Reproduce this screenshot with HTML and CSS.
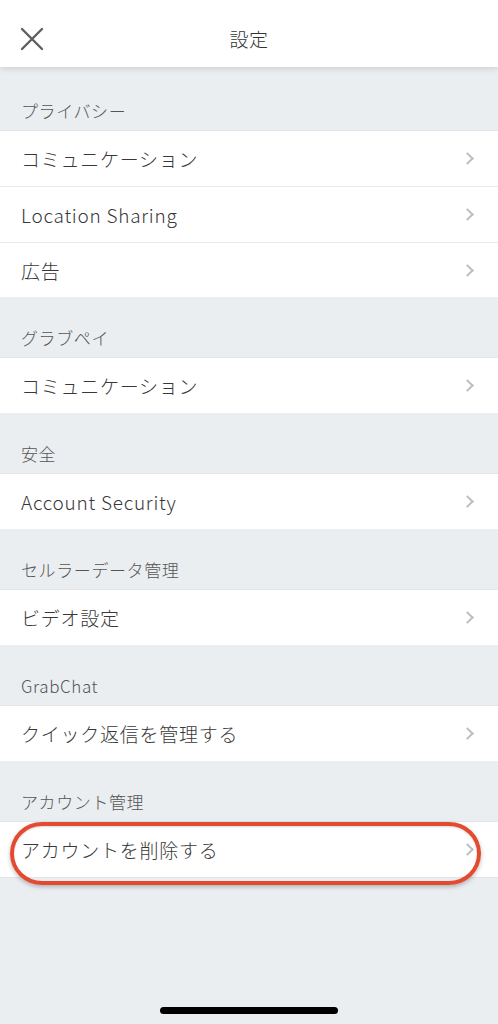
FILE: index.html
```html
<!DOCTYPE html>
<html lang="ja">
<head>
<meta charset="utf-8">
<link rel="stylesheet" href="styles.css">
</head>
<body>
<div class="page">
  <header class="topbar">
    <svg class="close" width="24" height="24" viewBox="0 0 24 24"><path d="M2 2L22 22M22 2L2 22" stroke="#5f5f5f" stroke-width="2.4" stroke-linecap="round" fill="none"/></svg>
    <div class="title">設定</div>
  </header>
  <main class="content">
    <section class="group first">
      <div class="group-title">プライバシー</div>
      <div class="rows">
        <div class="row"><span>コミュニケーション</span><i class="chev"></i></div>
        <div class="row tall"><span>Location Sharing</span><i class="chev"></i></div>
        <div class="row"><span>広告</span><i class="chev"></i></div>
      </div>
    </section>
    <section class="group">
      <div class="group-title">グラブペイ</div>
      <div class="rows">
        <div class="row"><span>コミュニケーション</span><i class="chev"></i></div>
      </div>
    </section>
    <section class="group">
      <div class="group-title">安全</div>
      <div class="rows">
        <div class="row"><span>Account Security</span><i class="chev"></i></div>
      </div>
    </section>
    <section class="group">
      <div class="group-title">セルラーデータ管理</div>
      <div class="rows">
        <div class="row"><span>ビデオ設定</span><i class="chev"></i></div>
      </div>
    </section>
    <section class="group">
      <div class="group-title">GrabChat</div>
      <div class="rows">
        <div class="row"><span>クイック返信を管理する</span><i class="chev"></i></div>
      </div>
    </section>
    <section class="group last">
      <div class="group-title">アカウント管理</div>
      <div class="rows">
        <div class="row highlighted"><span>アカウントを削除する</span><i class="chev"></i><div class="mark"></div></div>
      </div>
    </section>
  </main>
  <div class="home-bar"></div>
</div>
</body>
</html>
```
FILE: styles.css
```css
* { box-sizing: border-box; }
html, body { margin: 0; padding: 0; }
body {
  background: #ebeef1;
  font-family: "Noto Sans CJK JP", "Noto Sans", sans-serif;
  color: #383838;
}
.page {
  width: 498px;
  height: 1024px;
  position: relative;
  overflow: hidden;
  background: #ebeef1;
}
.topbar {
  height: 67px;
  background: #fff;
  display: flex;
  align-items: center;
  justify-content: center;
  position: relative;
  box-shadow: 0 2px 6px rgba(0,0,0,0.12);
  z-index: 2;
}
.close {
  position: absolute;
  left: 20px;
  top: 27px;
}
.title {
  font-size: 19px;
  font-weight: 300;
  color: #333;
  margin-top: 10px;
  letter-spacing: 0.5px;
}
.group-title {
  height: 60px;
  display: flex;
  align-items: flex-end;
  padding: 0 0 7px 21px;
  font-size: 17px;
  font-weight: 300;
  color: #555;
  letter-spacing: 0.6px;
}
.group.first .group-title { height: 63px; }
.rows {
  background: #fff;
  border-top: 1px solid #e2e5e8;
}
.group.last .rows { border-bottom: 1px solid #e2e5e8; }
.row {
  height: 55px;
  display: flex;
  align-items: center;
  justify-content: space-between;
  padding: 0 24px 0 21px;
  font-size: 19px;
  font-weight: 300;
  color: #383838;
  letter-spacing: 0.75px;
  position: relative;
}
.row.tall { height: 56px; }
.row + .row { border-top: 1px solid #e6e8eb; }
.chev {
  width: 9px;
  height: 9px;
  border-right: 2px solid #bdbdbd;
  border-bottom: 2px solid #bdbdbd;
  transform: rotate(-45deg);
  margin-right: 2px;
}
.mark {
  position: absolute;
  left: 10px;
  top: 0;
  width: 471px;
  height: 63px;
  border: 4px solid #e34b31;
  border-radius: 32px / 31px;
  box-shadow: 0 2px 4px rgba(0,0,0,0.25), inset 0 1px 2px rgba(0,0,0,0.15);
  pointer-events: none;
}
.home-bar {
  position: absolute;
  left: 160px;
  top: 1007px;
  width: 178px;
  height: 7px;
  border-radius: 4px;
  background: #000;
}
```
